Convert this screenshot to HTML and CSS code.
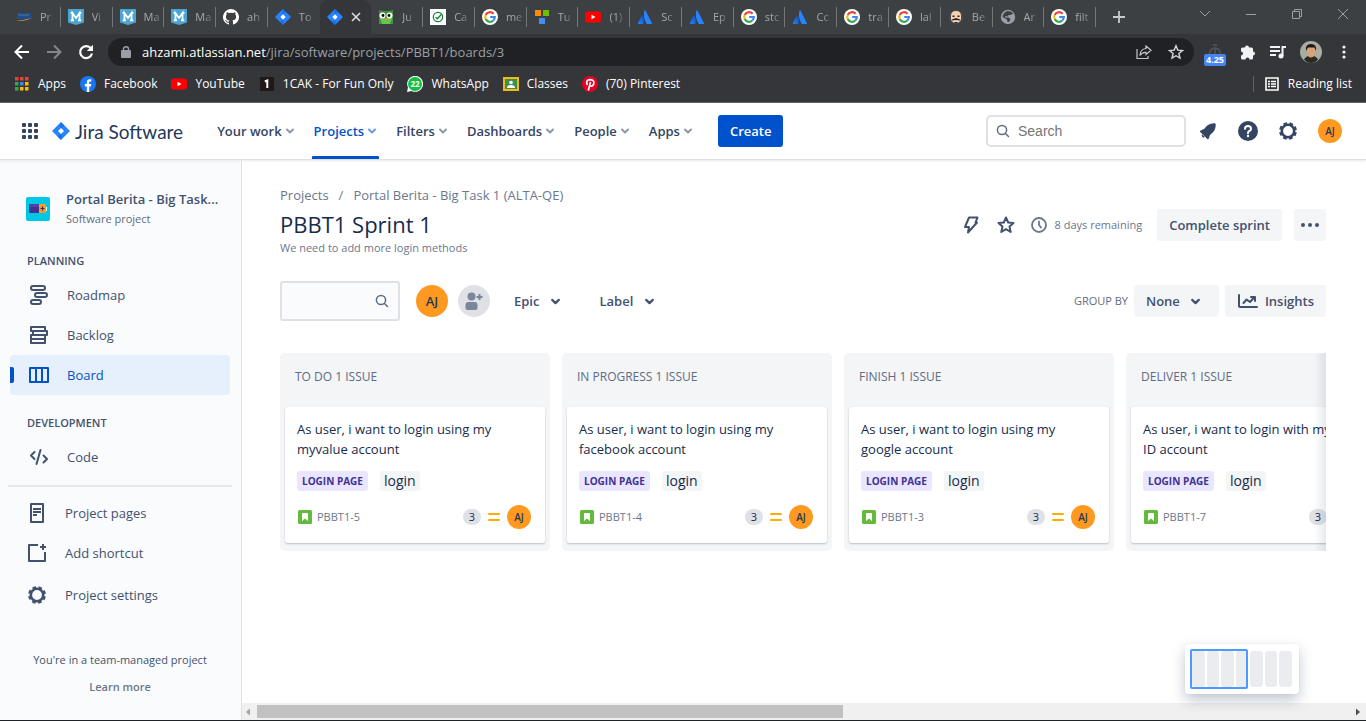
FILE: index.html
```html
<!DOCTYPE html>
<html lang="en">
<head>
<meta charset="utf-8">
<title>PBBT1 Sprint 1 - Jira Software</title>
<link rel="stylesheet" href="styles.css">
</head>
<body>
<svg class="defs" aria-hidden="true">
  <defs>
    <linearGradient id="ag" x1="1" y1="0" x2="0" y2="1"><stop offset="0" stop-color="#0a50c8"/><stop offset="1" stop-color="#2684ff"/></linearGradient>
    <symbol id="jira" viewBox="0 0 18 18"><path fill="#2684ff" d="M9 0l8.500 8.400q.6.600 0 1.200L9 18 .5 9.600q-.6-.6 0-1.200z"/><path fill="#0f5fd8" d="M9 0q-1.500 3 0 6l3 3-3 3q2 2.500 0 6L5.500 14.500 9 12 6 9l3-3 3.500-2.500z" opacity=".55"/><path class="jira-hole" d="M9 6l3 3-3 3-3-3z"/></symbol>
    <symbol id="m" viewBox="0 0 16 16"><path fill="#4aa5d2" d="M0 0h16v13.500L8 16 0 13.500z"/><path fill="none" stroke="#fff" stroke-width="1.800" d="M4.500 11V4L8 9l3.500-5v7M2.500 3.900h2.500M11 3.900h2.500M2.700 11.300h3.300M10 11.300h3.300"/></symbol>
    <symbol id="google" viewBox="0 0 16 16"><circle cx="8" cy="8" r="8" fill="#fff"/><g fill="none" stroke-width="2.200"><path stroke="#ea4335" d="M11.600 4.800A4.800 4.800 0 0 0 3.700 5.900"/><path stroke="#fbbc05" d="M3.700 5.900a4.800 4.800 0 0 0 0 4.200"/><path stroke="#34a853" d="M3.700 10.100a4.800 4.800 0 0 0 7.600 1.400"/><path stroke="#4285f4" d="M11.300 11.500A4.700 4.700 0 0 0 12.800 8H8.200"/></g></symbol>
    <symbol id="atl" viewBox="0 0 16 16"><path fill="#2684ff" d="M7.500 1.500Q8 .8 8.500 1.500L15 14.300q.2.700-.5.700h-4.300Q9.700 15 9.500 14.500 5.500 7 7.500 1.500z"/><path fill="url(#ag)" d="M4.500 7q.4-.4.800.1Q7.500 10 6.400 14.500q-.1.500-.7.500H1.300q-.6 0-.4-.7z"/></symbol>
    <symbol id="yt" viewBox="0 0 16 16"><rect y="2.500" width="16" height="11" rx="2.800" fill="#f00"/><path fill="#fff" d="M6.500 5.700v4.600l4-2.300z"/></symbol>
    <symbol id="chev" viewBox="0 0 10 10"><path fill="none" stroke="currentColor" stroke-width="2" stroke-linecap="round" stroke-linejoin="round" d="M2 3.500l3 3 3-3"/></symbol>
    <symbol id="search" viewBox="0 0 14 14"><g fill="none" stroke="currentColor" stroke-width="1.500" stroke-linecap="round"><circle cx="6" cy="6" r="4.600"/><path d="M9.500 9.500l3 3"/></g></symbol>
    <symbol id="gear" viewBox="0 0 20 20"><circle cx="10" cy="10" r="6.200" fill="none" stroke="currentColor" stroke-width="2.600"/><circle cx="10" cy="10" r="7.800" fill="none" stroke="currentColor" stroke-width="2.200" stroke-dasharray="3.600 2.526" stroke-dashoffset="-1.300"/></symbol>
    <symbol id="story" viewBox="0 0 14 14"><rect width="14" height="14" rx="1.500" fill="#63ba3c"/><path fill="#fff" d="M4 4q0-.9.900-.9h4.200q.9 0 .9.900v7L7 8.400 4 11z"/></symbol>
    <symbol id="medium" viewBox="0 0 12 10"><path fill="none" stroke="#ffab00" stroke-width="2" stroke-linecap="round" d="M1 2h10M1 8h10"/></symbol>
  </defs>
</svg>

<header class="chrome">
  <div class="tabstrip">
    <nav class="tabs" aria-label="Tabs">
      <div class="tab"><svg viewBox="0 0 16 16"><path fill="#194f96" d="M1 4h14l1 5-15 1z"/><path fill="#5d7296" d="M2 5.500h11v1H2z"/><path fill="#e9a15b" d="M0 12q8-1 16-3-7 3.500-16 3z"/></svg><span>Pr</span></div>
      <div class="tab"><svg><use href="#m"/></svg><span>Vi</span></div>
      <div class="tab"><svg><use href="#m"/></svg><span>Ma</span></div>
      <div class="tab"><svg><use href="#m"/></svg><span>Ma</span></div>
      <div class="tab"><svg viewBox="0 0 16 16"><path fill="#fff" d="M8 0a8 8 0 0 0-2.500 15.600c.4.100.5-.2.500-.4v-1.500c-2.200.5-2.700-.9-2.700-.9-.4-.9-.9-1.200-.9-1.200-.7-.5.100-.5.100-.5.800.1 1.200.8 1.200.8.700 1.200 1.900.9 2.300.7.100-.5.300-.9.500-1.100-1.800-.2-3.600-.9-3.600-4 0-.9.300-1.600.8-2.100-.1-.2-.4-1 .1-2.100 0 0 .7-.2 2.200.8a7.500 7.500 0 0 1 4 0c1.500-1 2.200-.8 2.200-.8.400 1.100.2 1.900.1 2.100.5.600.8 1.300.8 2.100 0 3.100-1.900 3.700-3.700 3.900.3.300.6.800.6 1.500v2.300c0 .2.100.5.500.4A8 8 0 0 0 8 0z"/></svg><span>ah</span></div>
      <div class="tab"><svg><use href="#jira"/></svg><span>To</span></div>
      <div class="tab tab-active"><svg><use href="#jira"/></svg><button class="tab-close" aria-label="Close tab"><svg viewBox="0 0 10 10"><path stroke="#dadce0" stroke-width="1.600" d="M1 1l8 8M9 1L1 9"/></svg></button></div>
      <div class="tab"><svg viewBox="0 0 16 16"><path fill="#42933b" d="M1 1q2 1 7 1t7-1v14H1z"/><path fill="#63c454" d="M2 9h12l-2 6H4z"/><circle cx="4.500" cy="6.500" r="3" fill="#fff"/><circle cx="11.500" cy="6.500" r="3" fill="#fff"/><circle cx="5" cy="6.500" r="1.400"/><circle cx="11" cy="6.500" r="1.400"/><path fill="#f08c1e" d="M6.500 9h3L8 12z"/></svg><span>Ju</span></div>
      <div class="tab"><svg viewBox="0 0 16 16"><path fill="#fff" d="M0 0h16v16H0z"/><circle cx="8" cy="8" r="4.700" fill="none" stroke="#188038" stroke-width="1.200"/><path fill="none" stroke="#188038" stroke-width="1.400" d="M5.500 8.200l1.800 1.600 4-4.300"/></svg><span>Ca</span></div>
      <div class="tab"><svg><use href="#google"/></svg><span>me</span></div>
      <div class="tab"><svg viewBox="0 0 16 16"><path fill="#ff8c00" d="M1 1h6v6H1z"/><path fill="#6bbf00" d="M9 1h6v6H9z"/><path fill="#3e8fef" d="M5 9h6v6H5z"/></svg><span>Tu</span></div>
      <div class="tab"><svg><use href="#yt"/></svg><span>(1)</span></div>
      <div class="tab"><svg><use href="#atl"/></svg><span>Sc</span></div>
      <div class="tab"><svg><use href="#atl"/></svg><span>Ep</span></div>
      <div class="tab"><svg><use href="#google"/></svg><span>stc</span></div>
      <div class="tab"><svg><use href="#atl"/></svg><span>Cc</span></div>
      <div class="tab"><svg><use href="#google"/></svg><span>tra</span></div>
      <div class="tab"><svg><use href="#google"/></svg><span>lal</span></div>
      <div class="tab"><svg viewBox="0 0 16 16"><circle cx="8" cy="8" r="7" fill="#4b4b4d"/><path fill="#f3d3b0" d="M3 7q0-5 5-5t5 5v3q-1 4-5 4t-5-4z"/><path fill="#222" d="M4.500 6.500h2V8h-2zM9.500 6.500h2V8h-2zM4 10.500l4-1.500 4 1.500v1L8 11l-4 .5zM6.500 13h3v1h-3z"/></svg><span>Be</span></div>
      <div class="tab"><svg viewBox="0 0 16 16"><circle cx="8" cy="8" r="7.200" fill="#9aa0a6"/><path fill="#3c4043" d="M7 2q5 0 6 3l-3 1H8.500L8 7.500 5.500 7 5 8.500h4l1.500 2L9 13H7.500L7 10.500 2.500 8Q3 4 7 2z"/></svg><span>Ar</span></div>
      <div class="tab"><svg><use href="#google"/></svg><span>filt</span></div>
    </nav>
    <div class="win">
      <button aria-label="New tab"><svg width="12" height="12" viewBox="0 0 12 12"><path stroke="#c8cbce" stroke-width="1.800" d="M6 0v12M0 6h12"/></svg></button>
      <div class="win-right">
        <button aria-label="Search tabs"><svg width="12" height="12" viewBox="0 0 12 12"><path fill="none" stroke="#9aa0a6" d="M1 3l5 5 5-5"/></svg></button>
        <button aria-label="Minimize"><svg width="12" height="12" viewBox="0 0 12 12"><path stroke="#9aa0a6" d="M1 6.500h10"/></svg></button>
        <button aria-label="Restore"><svg width="12" height="12" viewBox="0 0 12 12"><path fill="none" stroke="#9aa0a6" d="M1.500 3.500h7v7h-7zM3.500 3.500v-2h7v7h-2"/></svg></button>
        <button aria-label="Close"><svg width="12" height="12" viewBox="0 0 12 12"><path stroke="#9aa0a6" d="M1 1l10 10M11 1L1 11"/></svg></button>
      </div>
    </div>
  </div>

  <div class="toolbar">
    <button aria-label="Back"><svg width="16" height="16" viewBox="0 0 16 16"><path fill="none" stroke="#fff" stroke-width="2" d="M15 8H2M8 1.500L1.500 8 8 14.500"/></svg></button>
    <button aria-label="Forward"><svg width="16" height="16" viewBox="0 0 16 16"><path fill="none" stroke="#85878b" stroke-width="2" d="M1 8h13M8 1.500L14.500 8 8 14.500"/></svg></button>
    <button aria-label="Reload"><svg width="16" height="16" viewBox="0 0 16 16"><path fill="none" stroke="#fff" stroke-width="2.200" d="M13 4.500A6 6 0 1 0 14 9.500"/><path fill="#fff" d="M15 .8V7H8.800z"/></svg></button>
    <div class="omnibox">
      <svg width="10" height="12" viewBox="0 0 10 12"><path fill="#9aa0a6" d="M1 4h8q1 0 1 1v6q0 1-1 1H1q-1 0-1-1V5q0-1 1-1z"/><path fill="none" stroke="#9aa0a6" stroke-width="1.400" d="M2.500 5V3a2.500 2.300 0 0 1 5 0v2"/></svg>
      <div class="url"><b>ahzami.atlassian.net</b>/jira/software/projects/PBBT1/boards/3</div>
      <button aria-label="Share"><svg width="16" height="16" viewBox="0 0 16 16"><path fill="none" stroke="#c4c7ca" stroke-width="1.200" d="M1 5v9.500h11V12M10 2l5 4.300-5 4.200V8.300Q6 8 3.800 11.500 4.500 5 10 4.500z"/></svg></button>
      <button aria-label="Bookmark"><svg width="16" height="16" viewBox="0 0 16 16"><path fill="none" stroke="#d6d8da" stroke-width="1.400" d="M8 1.800l1.800 4.300 4.700.4-3.600 3 1.100 4.600L8 11.700l-4 2.400 1.100-4.600-3.600-3 4.700-.4z"/></svg></button>
    </div>
    <div class="extensions">
      <div class="timer"><svg width="16" height="10" viewBox="0 0 16 10"><path fill="none" stroke="#55575b" stroke-width="1.400" d="M6 1h4M2.500 10a5.500 6 0 1 1 11 0M8 5v5"/></svg><span>4.25</span></div>
      <svg width="16" height="16" viewBox="0 0 16 16"><path fill="#f1f3f4" d="M1 5q0-1.500 1.500-1.500H5a2 2 0 1 1 4 0h2.500Q13 3.500 13 5v2.500a2 2 0 1 1 0 4V14q0 1.500-1.500 1.500H9.500a2 2 0 0 0-4 0H2.500Q1 15.500 1 14v-2.500a2 2 0 0 0 0-4z"/></svg>
      <svg width="16" height="16" viewBox="0 0 16 16"><path stroke="#f1f3f4" stroke-width="1.800" d="M0 3h10M0 7h10M0 11h6"/><path fill="none" stroke="#f1f3f4" stroke-width="2" d="M12.500 12V3H16"/><circle cx="11" cy="12" r="2.500" fill="#f1f3f4"/></svg>
      <svg width="22" height="22" viewBox="0 0 22 22"><circle cx="11" cy="11" r="11" fill="#a9aca1"/><path fill="#2b2924" d="M4 18.500q2-3.500 5-3.500h4q3 0 5 3.500-3 3.500-7 3.500t-7-3.500z"/><path fill="#d8a37c" d="M7 8q0-3 4-3t4 3v4q-1 4.500-4 4.500T7 12z"/><path fill="#1c1815" d="M6 10q-1-7 5-7t5 7l-1.500-3.500H8z"/></svg>
      <svg width="16" height="16" viewBox="0 0 16 16" fill="#f1f3f4"><circle cx="8" cy="3" r="1.600"/><circle cx="8" cy="8" r="1.600"/><circle cx="8" cy="13" r="1.600"/></svg>
    </div>
  </div>

  <nav class="bookmarks" aria-label="Bookmarks">
    <a href="#"><svg viewBox="0 0 16 16"><path fill="#ea4335" d="M1 1h3.500v3.500H1zM6 1h3.500v3.500H6zM11 1h3.500v3.500H11z"/><path fill="#34a853" d="M1 6h3.500v3.500H1zM1 11h3.500v3.500H1z"/><path fill="#4285f4" d="M6 6h3.500v3.500H6z"/><path fill="#fbbc05" d="M11 6h3.500v3.500H11zM6 11h3.500v3.500H6zM11 11h3.500v3.500H11z"/></svg>Apps</a>
    <a href="#"><svg viewBox="0 0 16 16"><circle cx="8" cy="8" r="8" fill="#1877f2"/><path fill="#fff" d="M6.800 16v-5.600H4.800V8h2V6.300q0-3 3-3h1.500v2.200h-1q-1.200 0-1.200 1.200V8h2.200l-.4 2.400H9.200V16z"/></svg>Facebook</a>
    <a href="#"><svg><use href="#yt"/></svg>YouTube</a>
    <a href="#"><svg viewBox="0 0 16 16"><path fill="#211915" d="M1 1h14v14H1z"/><path fill="none" stroke="#fff" stroke-width="2" d="M5.800 5.500l2.500-1V12"/></svg>1CAK - For Fun Only</a>
    <a href="#"><svg viewBox="0 0 16 16"><path fill="#fff" d="M0 16l1-4.500A8 8 0 1 1 4.500 15z"/><circle cx="8" cy="8" r="7" fill="#0fc143"/><text x="8" y="11" text-anchor="middle" class="wa">22</text></svg>WhatsApp</a>
    <a href="#"><svg viewBox="0 0 16 16"><path fill="#f4b913" d="M0 1h16v14H0z"/><path fill="#3d9150" d="M2 3h12v10H2z"/><path fill="#fff" d="M4 12q0-3 4-3t4 3z"/><circle cx="8" cy="6.500" r="1.800" fill="#fff"/></svg>Classes</a>
    <a href="#"><svg viewBox="0 0 16 16"><circle cx="8" cy="8" r="8" fill="#e60023"/><path fill="none" stroke="#fff" stroke-width="1.700" d="M5.300 9Q3.300 3.700 8.200 3.600q4.500.2 3.500 4.200-1.500 3.500-4 1.700M8.500 6L6.300 14.500"/></svg>(70) Pinterest</a>
    <a href="#" class="reading"><svg viewBox="0 0 16 16"><path fill="none" stroke="#fff" stroke-width="1.600" d="M2 2h12v12H2z"/><path stroke="#fff" stroke-width="1.400" d="M4 5.500h2M7 5.500h5M4 8h2M7 8h5M4 10.500h2M7 10.500h5"/></svg>Reading list</a>
  </nav>
</header>

<header class="appbar">
  <button class="switcher" aria-label="App switcher"><svg width="16" height="16" viewBox="0 0 16 16" fill="#344563"><rect width="4" height="4" rx="1"/><rect x="6" width="4" height="4" rx="1"/><rect x="12" width="4" height="4" rx="1"/><rect y="6" width="4" height="4" rx="1"/><rect x="6" y="6" width="4" height="4" rx="1"/><rect x="12" y="6" width="4" height="4" rx="1"/><rect y="12" width="4" height="4" rx="1"/><rect x="6" y="12" width="4" height="4" rx="1"/><rect x="12" y="12" width="4" height="4" rx="1"/></svg></button>
  <a href="#" class="logo"><svg width="18" height="18"><use href="#jira"/></svg>Jira Software</a>
  <nav class="menu" aria-label="Primary">
    <button>Your work<svg><use href="#chev"/></svg></button>
    <button class="current">Projects<svg><use href="#chev"/></svg></button>
    <button>Filters<svg><use href="#chev"/></svg></button>
    <button>Dashboards<svg><use href="#chev"/></svg></button>
    <button>People<svg><use href="#chev"/></svg></button>
    <button>Apps<svg><use href="#chev"/></svg></button>
  </nav>
  <button class="create">Create</button>
  <div class="appbar-right">
    <label class="search"><svg width="14" height="14"><use href="#search"/></svg><input type="search" placeholder="Search" aria-label="Search"></label>
    <button aria-label="Notifications"><svg width="20" height="20" viewBox="0 0 20 20"><path fill="#344563" d="M2 10.800q-.2-.8.600-1.200L6 8l3-3.200Q11.500 2.300 16.700 2.300q1 0 1 1 0 5.200-2.500 7.700L12 14l-1.200 3.600q-.6.900-1.400.3z"/><path fill="#344563" d="M4 13.200l2.800 2.800q-1.300 1-2.400 0-1.200-1.200-.4-2.800z"/></svg></button>
    <button aria-label="Help"><svg width="20" height="20" viewBox="0 0 20 20"><circle cx="10" cy="10" r="10" fill="#344563"/><path fill="none" stroke="#fff" stroke-width="2" stroke-linecap="round" d="M7 7.800Q7.100 5 10 5t3 2.700q0 1.600-1.700 2.300-1.300.6-1.300 2.200"/><circle cx="10" cy="15" r="1.200" fill="#fff"/></svg></button>
    <button aria-label="Settings"><svg width="20" height="20"><use href="#gear"/></svg></button>
    <button class="avatar avatar-sm" aria-label="Your profile">AJ</button>
  </div>
</header>

<div class="layout">
  <aside class="sidebar">
    <div class="project">
      <svg width="24" height="24" viewBox="0 0 24 24"><rect width="24" height="24" rx="2" fill="#00c7e5"/><path fill="#403294" d="M4 7h10v9H4q-1 0-1-1V8q0-1 1-1z"/><path fill="#5243aa" d="M4 7h10v3H3V8q0-1 1-1z"/><path fill="#ff991f" d="M13 7h6q1 0 1 1v7q0 1-1 1h-6z"/><path fill="#fff" d="M20 10h1v4h-1z"/><path stroke="#253858" stroke-width="1.200" d="M16.500 9.500v4M14.500 11.500h4"/></svg>
      <div><strong>Portal Berita - Big Task...</strong><small>Software project</small></div>
    </div>
    <h2>PLANNING</h2>
    <nav aria-label="Planning">
      <a href="#" class="item"><svg viewBox="0 0 24 24"><g fill="none" stroke="currentColor" stroke-width="2"><rect x="4" y="3" width="14" height="4" rx="2"/><rect x="8" y="10" width="12" height="4" rx="2"/><rect x="4" y="17" width="10" height="4" rx="2"/></g></svg>Roadmap</a>
      <a href="#" class="item"><svg viewBox="0 0 24 24"><path fill="none" stroke="currentColor" stroke-width="2" stroke-linejoin="round" d="M4 4h14v4H4zM6 8h14v4H6zM4 12h14v4H4zM4 16h14v4H4z"/></svg>Backlog</a>
      <a href="#" class="item selected"><svg viewBox="0 0 24 24"><path fill="none" stroke="currentColor" stroke-width="2" stroke-linejoin="round" d="M3 5h18v14H3zM9 5v14M15 5v14"/></svg>Board</a>
    </nav>
    <h2>DEVELOPMENT</h2>
    <nav aria-label="Development">
      <a href="#" class="item"><svg viewBox="0 0 24 24"><path fill="none" stroke="currentColor" stroke-width="2" stroke-linecap="round" stroke-linejoin="round" d="M7.500 7L4 10.500 7.500 14M13.500 5l-4 14M16.500 10.500L20 14l-3.500 3.500"/></svg>Code</a>
    </nav>
    <hr>
    <nav class="more" aria-label="Project">
      <a href="#" class="item"><svg viewBox="0 0 24 24"><path fill="none" stroke="currentColor" stroke-width="2" stroke-linejoin="round" d="M6 3h12v18H6zM8 8h8M8 11h8M8 14h4"/></svg>Project pages</a>
      <a href="#" class="item"><svg viewBox="0 0 24 24"><path fill="none" stroke="currentColor" stroke-width="2" stroke-linejoin="round" d="M13 4H4v16h16v-9M18 3v6M15 6h6"/></svg>Add shortcut</a>
      <a href="#" class="item"><svg viewBox="-2 -2 24 24"><use href="#gear" width="20" height="20"/></svg>Project settings</a>
    </nav>
    <footer><p>You're in a team-managed project</p><a href="#">Learn more</a></footer>
  </aside>

  <div class="content">
    <main>
      <nav class="crumbs" aria-label="Breadcrumb"><a href="#">Projects</a><span>/</span><a href="#">Portal Berita - Big Task 1 (ALTA-QE)</a></nav>
      <div class="titlebar">
        <div><h1>PBBT1 Sprint 1</h1><p>We need to add more login methods</p></div>
        <div class="actions">
          <button class="icon-btn" aria-label="Automation"><svg width="20" height="20" viewBox="0 0 20 20"><path fill="none" stroke="currentColor" stroke-width="2" stroke-linejoin="round" d="M8 2.500h8.500L14.500 7.500H16L7 17.500 8 12H4z"/></svg></button>
          <button class="icon-btn" aria-label="Star"><svg width="20" height="20" viewBox="0 0 20 20"><path fill="none" stroke="currentColor" stroke-width="2" stroke-linejoin="round" d="M10 2.500l2.200 5 5.300.5-4 3.600 1.200 5.400-4.700-2.800L5.300 17l1.200-5.400-4-3.600 5.300-.5z"/></svg></button>
          <span class="remaining"><svg width="16" height="16" viewBox="0 0 16 16"><g fill="none" stroke="currentColor" stroke-width="1.800" stroke-linecap="round"><circle cx="8" cy="8" r="7"/><path d="M8 4.500V8l2 2.500"/></g></svg>8 days remaining</span>
          <button class="btn">Complete sprint</button>
          <button class="btn btn-dots" aria-label="More"><svg width="20" height="6" viewBox="0 0 20 6" fill="currentColor"><circle cx="3" cy="3" r="2"/><circle cx="10" cy="3" r="2"/><circle cx="17" cy="3" r="2"/></svg></button>
        </div>
      </div>

      <div class="filters">
        <label class="board-search"><input type="text" aria-label="Search this board"><svg width="14" height="14"><use href="#search"/></svg></label>
        <button class="avatar avatar-lg" aria-label="Filter by AJ">AJ</button>
        <button class="avatar avatar-lg add-people" aria-label="Add people"><svg width="20" height="20" viewBox="0 0 20 20"><circle cx="7.500" cy="5.500" r="4" fill="currentColor"/><path fill="currentColor" d="M1.500 14q0-3 3-3h6q3 0 3 3v3q0 2-2 2h-8q-2 0-2-2z"/><path stroke="currentColor" stroke-width="2" d="M15.500 3v6M12.500 6h6"/></svg></button>
        <button class="drop">Epic<svg><use href="#chev"/></svg></button>
        <button class="drop">Label<svg><use href="#chev"/></svg></button>
        <div class="group"><span>GROUP BY</span>
          <button class="btn btn-none">None<svg width="11" height="11"><use href="#chev"/></svg></button>
          <button class="btn btn-insights"><svg width="20" height="20" viewBox="0 0 20 20"><path fill="none" stroke="currentColor" stroke-width="2" stroke-linejoin="round" stroke-linecap="round" d="M1 4v11q0 1 1 1h17M5.500 12l3-3.500 3.500 2.500L16 6.500M13 6h4v4"/></svg>Insights</button>
        </div>
      </div>

      <div class="board">
        <section class="column"><h2>TO DO 1 ISSUE</h2>
          <article class="card"><p>As user, i want to login using my myvalue account</p><div class="tags"><b>LOGIN PAGE</b><span>login</span></div><div class="meta"><svg width="14" height="14"><use href="#story"/></svg><a href="#">PBBT1-5</a><i>3</i><svg width="12" height="10"><use href="#medium"/></svg><span class="avatar avatar-sm">AJ</span></div></article>
        </section>
        <section class="column"><h2>IN PROGRESS 1 ISSUE</h2>
          <article class="card"><p>As user, i want to login using my facebook account</p><div class="tags"><b>LOGIN PAGE</b><span>login</span></div><div class="meta"><svg width="14" height="14"><use href="#story"/></svg><a href="#">PBBT1-4</a><i>3</i><svg width="12" height="10"><use href="#medium"/></svg><span class="avatar avatar-sm">AJ</span></div></article>
        </section>
        <section class="column"><h2>FINISH 1 ISSUE</h2>
          <article class="card"><p>As user, i want to login using my google account</p><div class="tags"><b>LOGIN PAGE</b><span>login</span></div><div class="meta"><svg width="14" height="14"><use href="#story"/></svg><a href="#">PBBT1-3</a><i>3</i><svg width="12" height="10"><use href="#medium"/></svg><span class="avatar avatar-sm">AJ</span></div></article>
        </section>
        <section class="column"><h2>DELIVER 1 ISSUE</h2>
          <article class="card"><p>As user, i want to login with my<br>ID account</p><div class="tags"><b>LOGIN PAGE</b><span>login</span></div><div class="meta"><svg width="14" height="14"><use href="#story"/></svg><a href="#">PBBT1-7</a><i>3</i><svg width="12" height="10"><use href="#medium"/></svg><span class="avatar avatar-sm">AJ</span></div></article>
        </section>
        <div class="edge"></div>
      </div>
    </main>

    <div class="scrollbar"><svg width="15" height="16" viewBox="0 0 15 16"><path fill="#a3a3a3" d="M8 4.500v7L4 8z"/></svg><div class="track"><div class="thumb"></div></div><svg width="16" height="16" viewBox="0 0 16 16"><path fill="#505050" d="M6 4.500v7L10 8z"/></svg></div>
    <div class="minimap"><span></span><span></span><span></span><span></span><span></span><span></span><span></span><div class="viewport"></div></div>
  </div>
</div>
</body>
</html>
```
FILE: styles.css
```css
* { box-sizing: border-box; }
body {
  margin: 0;
  height: 100vh;
  display: flex;
  flex-direction: column;
  overflow: hidden;
  background: #fff;
  border-bottom: 1px solid #1d2326;
  color: #172b4d;
  font: 13px/20px "Open Sans", "Noto Sans", sans-serif;
}
button { font: inherit; color: inherit; background: none; border: 0; padding: 0; display: flex; align-items: center; justify-content: center; }
a { color: inherit; text-decoration: none; }
svg { flex: none; display: block; }
p, h1, h2 { margin: 0; }
.defs { position: absolute; width: 0; height: 0; }
.jira-hole { fill: #fff; }

/* Browser frame */
.chrome { flex: none; background: #35363a; border-bottom: 1px solid #5b5c60; color: #fff; font-size: 12px; }
.tabstrip { display: flex; height: 34px; padding-left: 9px; background: #3c4043; }
.tabs { display: flex; flex: 1; min-width: 0; }
.tab { flex: 1 1 0; min-width: 0; display: flex; align-items: center; gap: 8px; padding-left: 7px; position: relative; color: #a5a8ac; font-size: 11px; }
.tab > svg { width: 16px; height: 16px; }
.tab span { white-space: nowrap; mask-image: linear-gradient(90deg, #000 50%, #0006); }
.tab::after { content: ""; position: absolute; right: 0; top: 7px; width: 1px; height: 20px; background: #74777a; }
.tab .jira-hole { fill: #1a4f9c; }
.tab-active { background: #35363a; border-radius: 8px 8px 0 0; }
.tab-active::after, .tab:has(+ .tab-active)::after { display: none; }
.tab-close svg { width: 10px; height: 10px; }
.win { flex: none; width: 270px; display: flex; align-items: center; padding: 0 17px; justify-content: space-between; }
.win-right { display: flex; gap: 34px; padding-bottom: 6px; }
.toolbar { display: flex; align-items: center; height: 36px; padding-left: 14px; gap: 16px; }
.omnibox { flex: 1; height: 28px; border-radius: 14px; background: #202124; display: flex; align-items: center; gap: 16px; padding: 0 10px 0 13px; margin-left: -2px; }
.url { flex: 1; color: #9aa0a6; font-size: 13px; margin-left: -5px; }
.url b { color: #fff; font-weight: 400; }
.extensions { display: flex; align-items: center; gap: 14px; padding-right: 14px; margin-left: -6px; }
.timer { display: flex; flex-direction: column; align-items: center; width: 22px; padding-top: 6px; }
.timer span { background: #4285f4; border-radius: 2px; width: 22px; text-align: center; font-size: 9px; line-height: 12px; font-weight: 700; }
.bookmarks { display: flex; align-items: center; height: 32px; padding: 0 14px 4px; gap: 14px; }
.bookmarks a { display: flex; align-items: center; gap: 8px; }
.bookmarks svg { width: 16px; height: 16px; }
.wa { font: 700 8px "Open Sans", sans-serif; fill: #fff; }
.bookmarks .reading { margin-left: auto; border-left: 1px solid #5f6368; padding-left: 10px; height: 16px; }

/* Application bar */
.appbar { flex: none; height: 56px; display: flex; align-items: center; padding: 0 24px 0 22px; position: relative; z-index: 1; color: #344563; font-weight: 600; box-shadow: 0 1px 1px #dfe1e6, 0 2px 3px #ebecf0; }
.logo { display: flex; align-items: center; gap: 5px; margin-left: 14px; font: 400 19px "Lato", sans-serif; color: #253858; }
.menu { display: flex; align-self: stretch; gap: 15px; margin-left: 32px; }
.menu button { position: relative; gap: 3px; padding: 0 2px; }
.menu svg { width: 10px; height: 10px; color: #8d97a8; }
.menu .current { color: #0052cc; }
.menu .current svg { color: #6c9be2; }
.menu .current::after { content: ""; position: absolute; left: 0; right: 0; bottom: 0; height: 3px; background: #0052cc; border-radius: 1px 1px 0 0; }
.create { height: 32px; padding: 0 12px; margin-left: 23px; border-radius: 3px; background: #0052cc; color: #fff; }
.appbar-right { display: flex; align-items: center; gap: 20px; margin-left: auto; }
.search { display: flex; align-items: center; width: 200px; height: 32px; border: 2px solid #dfe1e6; border-radius: 5px; padding: 0 8px; margin-right: -8px; gap: 8px; color: #5e6c84; }
input { flex: 1; min-width: 0; border: 0; outline: 0; padding: 0; background: none; font: 14px "Liberation Sans", sans-serif; }
.search input::placeholder { color: #757575; }
.avatar { display: flex; align-items: center; justify-content: center; flex: none; border-radius: 50%; background: #ff991f; color: #253858; font-weight: 600; }
.avatar-sm { width: 24px; height: 24px; font-size: 10px; }
.avatar-lg { width: 32px; height: 32px; font-size: 13px; }

/* Sidebar */
.layout { flex: 1; min-height: 0; display: flex; }
.sidebar { flex: none; width: 242px; background: #fafbfc; border-right: 1px solid #dfe1e6; padding: 31px 9px 0 8px; color: #42526e; display: flex; flex-direction: column; }
.project { display: flex; align-items: center; gap: 16px; padding-left: 18px; height: 38px; }
.project strong, .project small { display: block; white-space: nowrap; }
.project strong { font-weight: 600; }
.project small { font-size: 11px; color: #5e6c84; }
.sidebar h2 { font-size: 11px; line-height: 16px; font-weight: 600; padding: 25px 0 6px 19px; }
.sidebar nav + h2 { padding-top: 20px; }
.item { display: flex; align-items: center; gap: 16px; height: 40px; margin: 0 2px; padding-left: 17px; border-radius: 4px; position: relative; }
.item svg { width: 24px; height: 24px; }
.selected { background: #e6effc; color: #0052cc; }
.selected::before { content: ""; position: absolute; left: 0; top: 12px; width: 4px; height: 16px; background: #0052cc; border-radius: 0 2px 2px 0; }
hr { border: 0; height: 2px; background: #e6e8ea; margin: 8px 0 6px; width: 100%; }
.more .item { padding-left: 15px; }
.more .item:last-child { margin-top: 2px; }
.sidebar footer { font-size: 11px; text-align: center; padding-top: 35px; }
.sidebar footer a { display: block; margin-top: 7px; font-weight: 600; color: #6b778c; }

/* Main content */
.content { flex: 1; min-width: 0; display: flex; flex-direction: column; position: relative; }
main { flex: 1; min-height: 0; padding: 26px 40px 0 38px; }
.crumbs { display: flex; gap: 10px; color: #6b778c; }
.titlebar { display: flex; justify-content: space-between; align-items: flex-start; margin-top: 4px; }
h1 { font-size: 22px; line-height: 30px; font-weight: 500; }
.titlebar p { font-size: 11px; line-height: 16px; padding-top: 1px; color: #6b778c; }
.actions { display: flex; align-items: center; gap: 12px; color: #42526e; }
.icon-btn { margin-right: 3px; }
.remaining { display: flex; align-items: center; gap: 8px; padding-right: 3px; color: #6b778c; font-size: 11px; }
.btn { height: 32px; border-radius: 3px; background: #f4f5f7; color: #42526e; font-weight: 600; padding: 0 12px; }
.btn-dots { padding: 0 6px; }
.filters { display: flex; align-items: center; margin-top: 25px; height: 40px; color: #42526e; font-weight: 600; }
.board-search { display: flex; align-items: center; width: 120px; height: 40px; border: 2px solid #dfe1e6; border-radius: 3px; background: #fafbfc; padding: 0 9px; margin-right: 16px; color: #5e6c84; }
.add-people { background: #dfe1e6; color: #7a869a; margin: 0 24px 0 10px; }
.drop { gap: 11px; margin-right: 38px; }
.drop svg { width: 11px; height: 11px; }
.group { display: flex; align-items: center; gap: 6px; margin-left: auto; }
.group span { font-size: 11px; font-weight: 400; color: #5e6c84; }
.btn-none { gap: 10px; padding-right: 18px; }
.btn-insights { gap: 7px; padding: 0 12px 0 13px; }

/* Board */
.board { display: flex; gap: 12px; margin-top: 32px; overflow: hidden; position: relative; }
.column { flex: none; width: 270px; background: #f4f5f7; border-radius: 5px; padding: 0 5px 8px; }
.column h2 { font-size: 12px; line-height: 14px; font-weight: 400; color: #5e6c84; padding: 17px 10px 23px; }
.card { background: #fff; border-radius: 3px; box-shadow: 0 1px 2px #b9bec8; padding: 12px; height: 136px; }
.tags { display: flex; align-items: center; gap: 12px; margin-top: 12px; }
.tags b { background: #eae6ff; color: #403294; font-size: 10px; line-height: 20px; font-weight: 700; padding: 0 5px; border-radius: 3px; }
.tags span { background: #f4f5f7; font-size: 14px; line-height: 20px; padding: 0 4px; border-radius: 3px; }
.meta { display: flex; align-items: center; gap: 7px; margin-top: 14px; padding: 0 2px 0 1px; }
.meta a { flex: 1; margin-left: -2px; font-size: 11px; font-weight: 500; color: #6b778c; }
.meta i { width: 18px; background: #dfe1e6; border-radius: 8px; line-height: 16px; font-size: 11px; font-style: normal; text-align: center; }
.edge { position: absolute; top: 0; right: 0; bottom: 0; width: 12px; background: linear-gradient(90deg, transparent, #091e4218); }

.scrollbar { flex: none; display: flex; align-items: center; height: 17px; background: #f0f0f0; }
.track { flex: 1; }
.thumb { width: 53.600%; height: 13px; background: #c1c1c1; }
.minimap { position: absolute; right: 67px; bottom: 26px; display: flex; gap: 2px; width: 114px; padding: 7px; height: 50px; border-radius: 3px; background: #fff; box-shadow: 0 6px 14px #091e4240, 0 0 1px #091e4230; }
.minimap span { flex: 1; background: #ebecf0; border-radius: 3px; }
.viewport { position: absolute; left: 5px; top: 5px; width: 58px; height: 40px; border: 2px solid #4c9aff; border-radius: 2px; }
```
